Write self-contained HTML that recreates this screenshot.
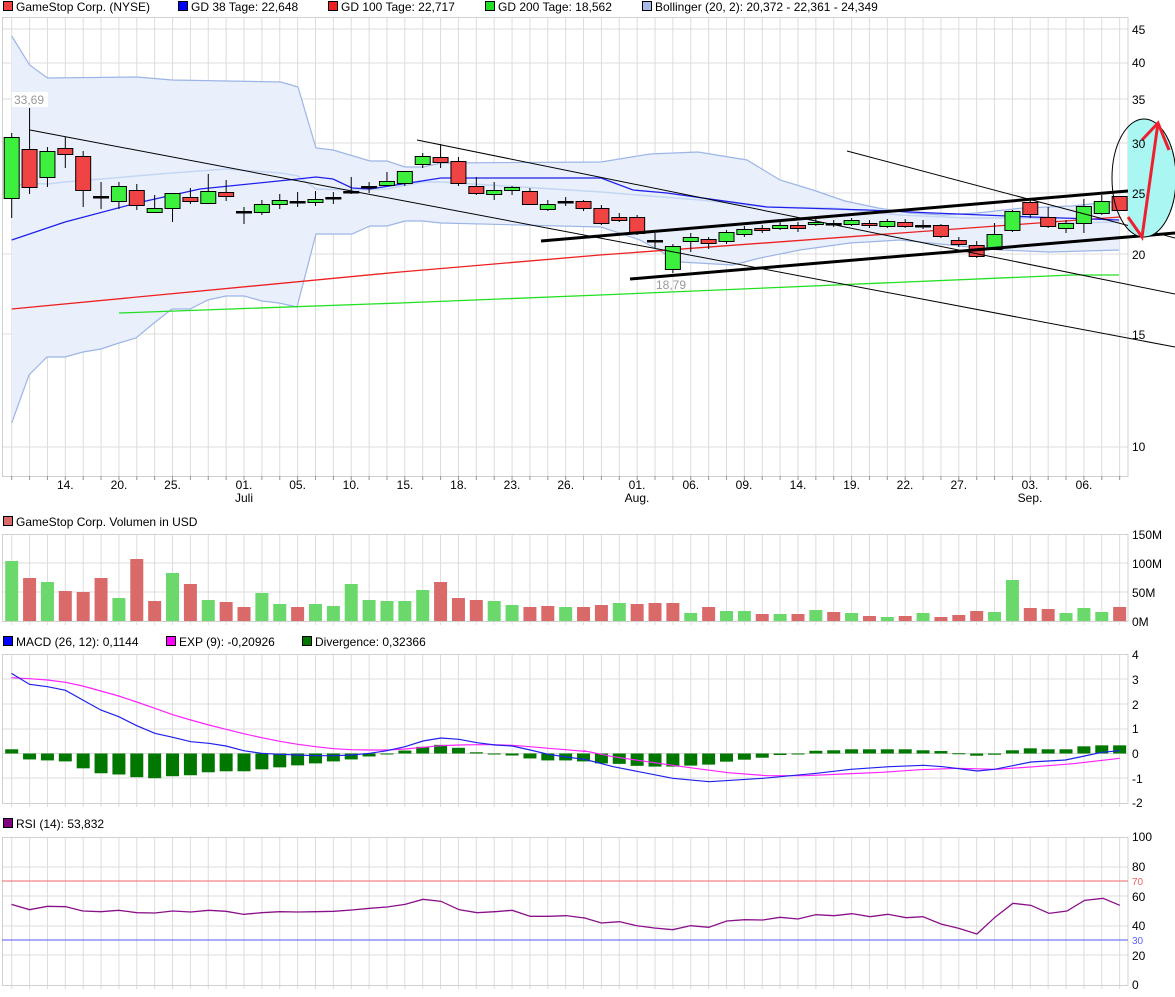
<!DOCTYPE html>
<html><head><meta charset="utf-8">
<style>
html,body{margin:0;padding:0;background:#fff;}
svg{display:block;font-family:"Liberation Sans",Arial,sans-serif;}
</style></head>
<body>
<svg id="c" width="1175" height="997" viewBox="0 0 1175 997" xmlns="http://www.w3.org/2000/svg">
<defs><clipPath id="rc"><rect x="1128" y="0" width="60" height="480"/></clipPath></defs>
<rect width="1175" height="997" fill="#fff"/>
<g id="grid"></g>
<g id="boll"></g>
<g id="lines"></g>
<g id="candles"></g>
<g id="anno"></g>
<g id="lower"></g>
<g font-size="12" fill="#000">
<rect x="3.5" y="1.5" width="9" height="9" fill="#f04040" stroke="#000"/><text x="16" y="11">GameStop Corp. (NYSE)</text>
<rect x="178.5" y="1.5" width="9" height="9" fill="#0000ff" stroke="#000"/><text x="191" y="11">GD 38 Tage: 22,648</text>
<rect x="328.5" y="1.5" width="9" height="9" fill="#ee2020" stroke="#000"/><text x="341" y="11">GD 100 Tage: 22,717</text>
<rect x="485.5" y="1.5" width="9" height="9" fill="#20e020" stroke="#000"/><text x="498" y="11">GD 200 Tage: 18,562</text>
<rect x="642.5" y="1.5" width="9" height="9" fill="#a8bce4" stroke="#000"/><text x="655" y="11">Bollinger (20, 2): 20,372 - 22,361 - 24,349</text>
<rect x="3.5" y="516.5" width="9" height="9" fill="#da6a6a" stroke="#000"/><text x="16" y="526">GameStop Corp. Volumen in USD</text>
<rect x="3.5" y="636.5" width="9" height="9" fill="#0000ff" stroke="#000"/><text x="16" y="646">MACD (26, 12): 0,1144</text>
<rect x="166.5" y="636.5" width="9" height="9" fill="#ff00ff" stroke="#000"/><text x="179" y="646">EXP (9): -0,20926</text>
<rect x="302.5" y="636.5" width="9" height="9" fill="#007800" stroke="#000"/><text x="315" y="646">Divergence: 0,32366</text>
<rect x="3.5" y="818.5" width="9" height="9" fill="#800080" stroke="#000"/><text x="16" y="828">RSI (14): 53,832</text>
<text x="1132" y="34">45</text><text x="1132" y="67">40</text><text x="1132" y="104">35</text><text x="1132" y="148">30</text><text x="1132" y="198">25</text><text x="1132" y="259">20</text><text x="1132" y="339">15</text><text x="1132" y="451">10</text>
<text x="1132" y="539">150M</text><text x="1132" y="568">100M</text><text x="1132" y="597">50M</text><text x="1132" y="626">0M</text>
<text x="1132" y="659">4</text><text x="1132" y="684">3</text><text x="1132" y="709">2</text><text x="1132" y="733">1</text><text x="1132" y="758">0</text><text x="1132" y="783">-1</text><text x="1132" y="807">-2</text>
<text x="1132" y="841">100</text><text x="1132" y="871">80</text><text x="1132" y="901">60</text><text x="1132" y="930">40</text><text x="1132" y="960">20</text><text x="1132" y="989">0</text>
<text x="1132" y="885" font-size="10" fill="#f06060">70</text><text x="1132" y="944" font-size="10" fill="#6060ff">30</text>
<g text-anchor="middle">
<text x="65.3" y="489">14.</text><text x="119" y="489">20.</text><text x="172.5" y="489">25.</text><text x="244" y="489">01.</text><text x="297.6" y="489">05.</text><text x="351" y="489">10.</text><text x="405" y="489">15.</text><text x="458.5" y="489">18.</text><text x="512" y="489">23.</text><text x="565.7" y="489">26.</text><text x="637" y="489">01.</text><text x="690.8" y="489">06.</text><text x="744" y="489">09.</text><text x="798" y="489">14.</text><text x="851.6" y="489">19.</text><text x="905" y="489">22.</text><text x="958.8" y="489">27.</text><text x="1030" y="489">03.</text><text x="1084" y="489">06.</text>
<text x="244" y="502">Juli</text><text x="637" y="502">Aug.</text><text x="1030" y="502">Sep.</text>
</g>
</g>
</svg>
<script>
(function(){
var NS="http://www.w3.org/2000/svg";
function el(p,t,a){var e=document.createElementNS(NS,t);for(var k in a)e.setAttribute(k,a[k]);p.appendChild(e);return e;}
function X(i){return 11.7+17.87*i;}
var G=document.getElementById('grid');
var panels=[[17,476],[534,621],[654,803],[837,985]];
panels.forEach(function(p){
  for(var i=0;i<63;i++){el(G,'line',{x1:X(i),x2:X(i),y1:p[0],y2:p[1]+4,stroke:'#dcdcdc','stroke-width':1});}
});
var hl=[29,63,99,143,193,254,334,447, 563,592, 679,704,729,753.5,778, 867,896,926,955];
hl.forEach(function(y){el(G,'line',{x1:2,x2:1128,y1:y,y2:y,stroke:'#dcdcdc','stroke-width':1});});
panels.forEach(function(p){el(G,'rect',{x:2.5,y:p[0]+0.5,width:1125.5,height:p[1]-p[0],fill:'none',stroke:'#d0d0d0','stroke-width':1});});
function P(a){return a.map(function(q){return q[0]+','+q[1];}).join(' ');}
// Bollinger
var B=document.getElementById('boll');
var U=[[11.7,36],[29.6,65],[47.5,78],[137,77],[172,80],[281,82],[298,87],[316,148],[333,150],[370,161],[387,161],[405,167],[423,167],[441,163],[601,162],[650,154],[698,152],[747,160],[780,180],[813,190],[845,201],[878,208],[910,213],[943,215],[977,213],[1023,208],[1072,206],[1119,201]];
var L=[[11.7,423],[29,375],[47,357],[65,357],[83,352],[101,349],[119,343],[136,338],[154,323],[172,309],[190,309],[208,300],[226,296],[244,296],[262,301],[279,303],[297,307],[316,234],[352,234],[370,226],[387,226],[405,221],[423,221],[441,223],[601,227],[640,240],[680,262],[733,265],[760,258],[800,250],[850,243],[900,240],[1000,250],[1050,252],[1119,250]];
var M=[[11.7,186],[29.6,183],[47.5,184],[65,182],[172,173],[226,169],[281,173],[298,176],[316,189],[352,190],[387,189],[423,182],[441,182],[601,192],[700,200],[767,207],[833,208],[900,215],[967,218],[1033,218],[1072,223],[1119,222]];
el(B,'polygon',{points:P(U.concat(L.slice().reverse())),fill:'#e9f0fc'});
el(B,'polyline',{points:P(U),fill:'none',stroke:'#9db5e6','stroke-width':1.2});
el(B,'polyline',{points:P(L),fill:'none',stroke:'#9db5e6','stroke-width':1.2});
el(B,'polyline',{points:P(M),fill:'none',stroke:'#c4d6f4','stroke-width':1.5});
var Ln=document.getElementById('lines');
el(Ln,'polyline',{points:P([[11.7,309],[400,272],[600,255],[1120,217]]),fill:'none',stroke:'#ee2020','stroke-width':1.3});
el(Ln,'polyline',{points:P([[119,313],[400,303],[600,295],[1072,275],[1119,275]]),fill:'none',stroke:'#22e022','stroke-width':1.3});
el(Ln,'polyline',{points:P([[11.7,240],[65,222],[137,203],[200,189],[298,179],[316,177],[333,179],[352,188],[370,189],[441,178],[601,178],[633,190],[667,193],[767,207],[867,210],[933,213],[1033,217],[1119,220]]),fill:'none',stroke:'#2020ee','stroke-width':1.3});
// candles
var C=[['g',137,198,133,218],['r',149,187,108,194],['g',151,177,147,187],['r',148,154,137,168],['r',156,190,151,207],['d',197,182,209],['g',186,201,182,209],['r',190,205,184,210],['g',208,212,195,213],['g',193,208,193,222],['r',197,201,188,204],['g',191,203,174,203],['r',192,196,180,201],['d',212,207,224],['g',204,212,200,215],['g',200,204,194,209],['d',202,192,207],['g',199,202,191,206],['d',198,192,204],['d',192,177,194],['d',187,182,193],['g',181,185,172,185],['g',171,183,171,186],['g',156,164,153,168],['r',157,162,144,168],['r',161,183,157,186],['r',186,193,177,195],['g',190,194,182,200],['g',187,190,186,195],['r',191,204,188,205],['g',204,209,200,211],['d',202,197,206],['r',201,208,200,211],['r',208,223,205,225],['r',217,220,213,222],['r',217,233,215,235],['d',241,233,248],['g',246,269,244,273],['g',237,241,233,252],['r',239,243,237,249],['g',232,241,230,244],['g',229,234,226,237],['r',228,230,225,233],['g',225,228,222,230],['r',225,228,222,232],['g',222,224,219,226],['d',224,220,227],['g',220,224,218,226],['r',223,225,220,228],['g',221,226,219,228],['r',222,226,219,228],['d',226,220,229],['r',225,236,224,238],['r',240,244,237,247],['r',245,256,241,258],['g',234,249,223,249],['g',211,230,210,232],['r',202,214,198,218],['r',217,226,207,228],['g',223,228,220,233],['g',206,223,199,233],['g',201,213,195,215],['r',196,210,196,211]];
var CG=document.getElementById('candles');
C.forEach(function(c,i){var x=X(i);
 if(c[0]=='d'){el(CG,'line',{x1:x,x2:x,y1:c[2],y2:c[3],stroke:'#000','stroke-width':1});el(CG,'rect',{x:x-8,y:c[1]-1,width:16,height:2.5,fill:'#000'});return;}
 el(CG,'line',{x1:x,x2:x,y1:c[3],y2:c[4],stroke:'#000','stroke-width':1});
 el(CG,'rect',{x:x-7.5,y:c[1]+0.5,width:15,height:Math.max(2,c[2]-c[1]),fill:c[0]=='g'?'#3ef03e':'#f04444',stroke:'#000','stroke-width':1});
});
var A=document.getElementById('anno');
el(A,'line',{x1:30,y1:130,x2:1175,y2:347,stroke:'#000','stroke-width':1});
el(A,'line',{x1:417,y1:140,x2:1175,y2:294,stroke:'#000','stroke-width':1});
el(A,'line',{x1:847,y1:151,x2:1175,y2:238,stroke:'#000','stroke-width':1});
el(A,'line',{x1:541,y1:241,x2:1175,y2:187,stroke:'#000','stroke-width':3});
el(A,'line',{x1:630,y1:279,x2:1175,y2:233,stroke:'#000','stroke-width':3});
el(A,'ellipse',{cx:1144,cy:178,rx:32,ry:59,fill:'#aaf6f2','clip-path':'url(#rc)'});
el(A,'ellipse',{cx:1144,cy:178,rx:32,ry:59,fill:'none',stroke:'#000','stroke-width':1});
el(A,'polyline',{points:'1128,217 1142,237 1158,123',fill:'none',stroke:'#ee2030','stroke-width':3});
el(A,'polyline',{points:'1142,140 1158,123 1169,150',fill:'none',stroke:'#ee2030','stroke-width':3});
el(A,'rect',{x:12,y:92,width:36,height:15,fill:'#fff'});
var t=el(A,'text',{x:14,y:104,'font-size':12,fill:'#999'});t.textContent='33,69';
t=el(A,'text',{x:656,y:289,'font-size':12,fill:'#999'});t.textContent='18,79';
for(var i=0;i<63;i++){el(A,'line',{x1:X(i),x2:X(i),y1:476,y2:480,stroke:'#999'});}
// volume
var LG=document.getElementById('lower');
var vt=[153,204,216,243,246,204,264,147,273,189,222,270,276,291,249,282,291,282,288,222,270,273,273,240,216,264,270,273,285,291,288,291,291,285,279,282,279,279,309,291,303,303,312,312,312,300,306,309,318,321,318,309,321,315,303,306,210,294,297,309,294,306,291];
var vc='GRGRRRGRRGRGRRGGRGGGGGGGRRRGGRRGRRGRRRGRGGRGRGRGRGRGRRRGGRRGGGR';
vt.forEach(function(v,i){var y=v/3+510;el(LG,'rect',{x:X(i)-6.5,y:y,width:13,height:621-y,fill:vc[i]=='G'?'#6ad86a':'#da6a6a'});});
// divergence
var dv=[0.17,-0.24,-0.28,-0.32,-0.6,-0.8,-0.85,-0.96,-1.0,-0.92,-0.88,-0.76,-0.72,-0.72,-0.64,-0.56,-0.48,-0.4,-0.32,-0.24,-0.12,-0.04,0.12,0.27,0.35,0.23,0.05,-0.04,-0.08,-0.2,-0.28,-0.28,-0.32,-0.4,-0.42,-0.5,-0.53,-0.53,-0.49,-0.45,-0.33,-0.25,-0.17,-0.06,-0.02,0.11,0.13,0.17,0.17,0.17,0.17,0.13,0.1,0.01,-0.09,-0.05,0.13,0.21,0.17,0.17,0.29,0.33,0.33];
dv.forEach(function(v,i){var h=Math.abs(v)*24.7;el(LG,'rect',{x:X(i)-6.5,y:v>0?753.5-h:753.5,width:13,height:Math.max(h,1),fill:'#007800'});});
function Z(a,ox,oy){return a.map(function(q){return [q[0]/2.61+ox,q[1]/3+oy];});}
var mac=Z([[30,490],[77,523],[124,530],[171,541],[216,570],[263,600],[310,620],[357,647],[404,670],[451,682],[498,695],[545,700],[590,708],[636,722],[683,730],[730,733],[777,735],[824,737],[871,737],[918,735],[965,730],[1010,722],[1057,710],[1104,693],[1151,684],[1198,688],[1245,698],[1292,705],[1337,708],[1384,720],[1431,733],[1478,741],[1525,748]],0,510).concat(Z([[22,747],[100,770],[255,805],[350,815],[490,805],[630,790],[720,778],[820,770],[910,766],[960,770],[1050,783],[1095,778],[1190,756],[1280,750],[1330,738],[1375,727],[1422,722]],575,510));
var exp=Z([[30,503],[77,506],[124,510],[171,517],[216,528],[263,543],[310,558],[357,576],[404,595],[451,614],[498,630],[545,645],[590,658],[636,671],[683,683],[730,694],[777,703],[824,710],[871,716],[918,719],[965,720],[1010,720],[1057,717],[1104,712],[1151,707],[1198,705],[1245,704],[1292,704],[1337,706],[1384,710],[1431,715],[1478,719],[1525,724]],0,510).concat(Z([[22,722],[100,740],[200,757],[300,773],[400,788],[500,797],[600,797],[700,792],[800,787],[900,779],[1000,775],[1100,778],[1200,770],[1300,761],[1422,745]],575,510));
el(LG,'polyline',{points:P(exp),fill:'none',stroke:'#ff22ff','stroke-width':1.2});
el(LG,'polyline',{points:P(mac),fill:'none',stroke:'#2020ee','stroke-width':1.2});
// RSI
el(LG,'line',{x1:2,x2:1128,y1:881,y2:881,stroke:'#f06a6a','stroke-width':1});
el(LG,'line',{x1:2,x2:1128,y1:940,y2:940,stroke:'#5a5aff','stroke-width':1});
var rsi=Z([[30,283],[77,299],[124,289],[171,290],[216,303],[263,305],[310,301],[357,308],[404,309],[451,303],[498,306],[545,301],[590,304],[636,313],[683,308],[730,305],[777,306],[824,305],[871,304],[918,300],[965,295],[1010,291],[1057,283],[1104,268],[1151,274],[1198,299],[1245,308],[1292,305],[1337,301],[1384,319],[1431,319],[1478,317],[1525,324]],0,810).concat(Z([[22,323],[69,339],[116,335],[160,347],[207,354],[255,359],[302,347],[349,352],[396,333],[443,329],[490,330],[535,322],[582,327],[629,314],[676,317],[723,311],[770,320],[817,313],[864,323],[908,320],[955,342],[1002,355],[1049,372],[1096,322],[1143,280],[1190,286],[1237,310],[1284,303],[1330,271],[1378,265],[1422,286]],575,810));
el(LG,'polyline',{points:P(rsi),fill:'none',stroke:'#8a108a','stroke-width':1.3});
})();
</script>
</body></html>
